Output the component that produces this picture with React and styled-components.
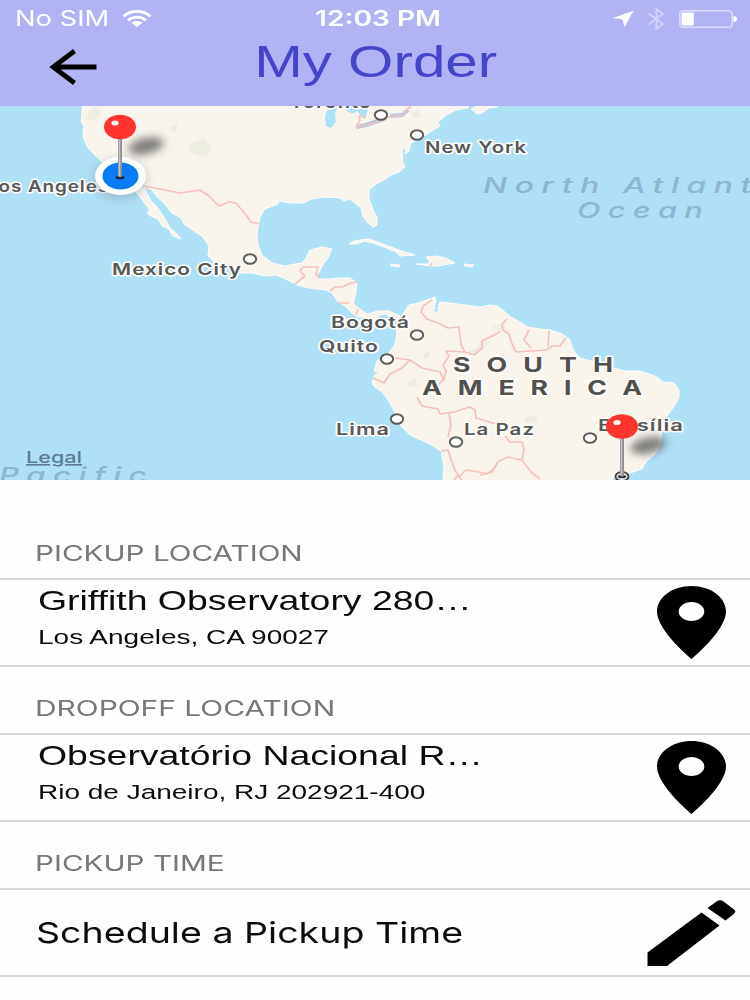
import styled, { createGlobalStyle } from 'styled-components'

const GlobalStyle = createGlobalStyle`
    body {
        margin: 0;
        background: #fefefe;
    }
    * {
        box-sizing: border-box;
    }
`
const Screen = styled.div`
    width: 750px;
    height: 1000px;
    overflow: hidden;
    background: #fefefe;
    font-family: "Liberation Sans", Arial, sans-serif;
    color: #0b0b0d;
`
// wide letterforms, used for every text outside the map
const Wide = styled.span`
    display: inline-block;
    white-space: nowrap;
    transform: scaleX(${props => props.$by || 1.34});
    transform-origin: ${props => props.$from || "left"} center;
`
const Header = styled.header`
    height: 106px;
    background: #b2b3f5;
`
const StatusBar = styled.div`
    height: 36px;
    padding: 1px 13px 0 15px;
    display: grid;
    grid-template-columns: 1fr auto 1fr;
    align-items: center;
    font-family: Inter, sans-serif;
    font-size: 21px;
    line-height: 35px;
    color: #fff;
`
const Carrier = styled.div`
    display: flex;
    align-items: center;
    gap: 35px;
`
const Clock = styled.div`
    font-weight: 600;
    padding-left: 4px;
`
const StatusIcons = styled.div`
    display: flex;
    justify-content: flex-end;
    align-items: center;
`
const NavBar = styled.div`
    height: 60px;
    padding: 0 48px;
    display: grid;
    grid-template-columns: 50px 1fr 50px;
    align-items: center;
`
const BackButton = styled.button`
    border: none;
    padding: 2px 0 0;
    background: none;
    display: flex;
    cursor: pointer;
`
const Title = styled.h1`
    margin: -8px 0 0 1px;
    font-size: 44px;
    font-weight: 400;
    line-height: 50px;
    text-align: center;
    color: #4545cb;
`
const MapView = styled.svg`
    display: block;
    width: 750px;
    height: 374px;
    background: #aee0f6;
    font-family: Inter, sans-serif;
`
const Section = styled.section`
    border-bottom: 2px solid #d8d6d9;
`
const SectionTitle = styled.h2`
    margin: 0;
    height: ${props => props.$first ? "100px" : "68px"};
    padding: 0 0 12px 35px;
    display: flex;
    align-items: flex-end;
    border-bottom: 2px solid #d8d6d9;
    font-family: Inter, sans-serif;
    font-size: 21.5px;
    font-weight: 400;
    line-height: 26px;
    color: #77767a;
`
const Row = styled.div`
    height: 85px;
    padding: 0 ${props => props.$edge || "24px"} 0 ${props => props.$edge ? "36px" : "38px"};
    display: flex;
    align-items: center;
    justify-content: space-between;
`
const Address = styled.div`
    align-self: flex-start;
    display: flex;
    flex-direction: column;
    align-items: flex-start;
    padding-top: 4px;
`
const Street = styled.div`
    font-size: 27.5px;
    line-height: 34px;
`
const City = styled.div`
    font-size: 20.5px;
    line-height: 38px;
`
const Action = styled.div`
    font-family: Inter, sans-serif;
    font-size: 29px;
    line-height: 40px;
`

const land = [
    // North and Central America
    "M83 100L81 122L84 126L83 137L88 148L96 156L103 163L110 176L130 188L136 192L141 198L145 204L150 210L147 213L151 216L158 219L162 226L167 228L170 231L173 236L181 239L177 234L170 228L166 220L161 213L158 208L151 201L147 194L145 187L152 190L157 197L163 202L172 213L181 218L184 224L194 231L203 237L209 246L208 256L215 263L230 268L240 273L252 273L265 276L276 275L290 281L297 285L309 288L326 290L332 293L338 302L345 306L353 314L358 317L365 317L375 320L380 315L386 314L392 318L398 322L400 316L389 311L378 311L367 314L360 309L353 303L355 297L357 283L350 278L340 278L330 279L318 279L317 276L322 266L328 258L332 249L322 247L310 250L306 258L302 263L295 264L285 266L272 263L262 255L258 245L257 233L260 217L265 209L278 204L279 201L290 203L303 203L312 199L325 197L340 198L344 201L350 199L356 204L361 208L363 216L367 222L373 227L377 225L377 218L372 207L369 199L369 190L376 184L384 180L391 175L399 172L405 167L403 163L402 150L406 146L405 154L409 151L411 143L418 140L430 132L438 127L440 126L438 122L445 116L456 110L468 108L472 100Z",
    "M471 109L477 106L480 100L503 100L497 107L489 108L482 113L477 114Z",
    // South America
    "M398 322L403 314L409 305L418 303L427 300L435 297L436 301L434 307L437 311L440 302L450 303L465 305L480 307L490 305L497 306L505 312L511 317L520 322L528 327L540 329L550 330L562 334L570 340L573 350L580 358L595 362L610 367L625 371L640 371L655 376L663 382L674 383L679 390L679 398L673 408L666 417L662 430L660 445L655 454L646 462L642 469L630 473L615 477L604 485L443 485L444 466L441 451L430 444L410 435L401 426L396 415L390 403L383 393L375 387L372 384L374 376L379 372L374 371L377 361L388 354L395 344L397 335L396 326Z",
    // Caribbean
    "M349 244L354 241L360 240L369 239L380 243L391 247L402 251L415 255L400 256L396 252L384 247L373 243L364 241L357 244Z",
    "M416 264L428 264L430 262L426 257L436 256L446 258L455 263L449 264L438 266L430 266Z",
    "M390 264L400 265L399 267L391 266Z",
    "M464 264L474 265L472 267L465 266Z",
]

const water = [
    "M326 112L331 107L337 107L335 114L336 122L331 128L326 126L325 118Z",
    "M343 106L348 112L353 114L357 111L361 116L366 118L368 108L364 104Z",
    "M435 309L438 309L437 312L434 311Z",
]
const lakes = "M356 127L366 125L378 121L386 118M390 116L402 115L408 110"

const parks = [
    "M466 352L477 347L482 338L490 342L483 350L472 355Z",
    "M492 327L503 323L506 328L500 332Z",
    "M410 112L418 110L421 116L414 118Z",
    "M191 143L204 139L211 147L207 158L196 154L188 152Z",
    "M88 112L96 106L102 112L95 121L87 118Z",
    "M168 128L178 123L175 133Z",
    "M422 355L428 352L430 356L425 359Z",
    "M406 382L416 379L418 386L409 388Z",
    "M524 418L538 415L536 422L526 423Z",
]

const borders = [
    "M143 186L160 189L180 193L200 190L209 196L219 206L229 202L236 203L246 215L251 222L260 224",
    "M356 127L360 120L359 116L366 118M356 127L375 123L388 117L402 115L411 106",
    "M295 284L305 276L300 271L303 267L318 267L316 274L319 278",
    "M330 291L335 287L342 287L351 283L357 282M338 303L349 303M356 315L358 309",
    "M432 300L423 306L421 312L427 319L438 323L448 328L459 327L461 345L465 352M395 358L410 360L422 368L440 372L444 380L446 371L443 365L449 356L446 351L465 352L474 355L482 348L482 341L500 332",
    "M373 378L384 383L390 374L402 368L410 360M444 379L435 388",
    "M507 319L502 324L503 330L509 334L512 344L516 352M529 330L524 340L531 348M516 352L546 350L552 346L560 346L566 338M549 331L548 346",
    "M417 397L422 406L438 409L440 414L454 412L470 407L475 410L476 418L496 424M449 413L451 425L448 437M441 451L448 450L454 468L459 477L466 470L479 472L487 474L494 469L498 462M454 480L458 475L462 480",
    "M505 436L510 442L522 442L524 450L522 460L531 472L540 479M480 475L492 472L495 466M497 462L508 457L521 460",
    "M432 263L430 266",
]

const cities = [
    { name: "Toronto", x: 290, y: 107.5, w: 82, dot: [381, 115] },
    { name: "New York", x: 425, y: 153, w: 102, dot: [417, 135] },
    { name: "Los Angeles", x: -13, y: 192, w: 122 },
    { name: "Mexico City", x: 112, y: 275, w: 130, dot: [250, 259] },
    { name: "Bogotá", x: 331, y: 328, w: 79, dot: [417, 335] },
    { name: "Quito", x: 319, y: 352, w: 60, dot: [387, 359] },
    { name: "Lima", x: 336, y: 435, w: 54, dot: [397, 419] },
    { name: "La Paz", x: 464, y: 435, w: 71, dot: [456, 442] },
    { name: "Brasília", x: 598, y: 431, w: 86, dot: [590, 438] },
]

const Pin = ({ x, y }) => (
    <g>
        <ellipse cx={x + 26} cy={y + 19} rx="18" ry="8" fill="#555" opacity="0.75" filter="url(#soft)" transform={`rotate(-12 ${x + 26} ${y + 19})`} />
        <path d={`M${x} ${y + 10}V${y + 50}`} stroke="#8d8d90" strokeWidth="4" />
        <path d={`M${x - 0.5} ${y + 10}V${y + 49}`} stroke="#c6c6c9" strokeWidth="1.6" />
        <ellipse cx={x} cy={y} rx="16" ry="12.2" fill="#fd352e" />
        <ellipse cx={x - 5} cy={y - 4} rx="3.6" ry="2.6" fill="#fff" opacity="0.95" />
    </g>
)

const OrderMap = () => (
    <MapView viewBox="0 106 750 374">
        <defs>
            <filter id="soft" x="-50%" y="-100%" width="200%" height="300%">
                <feGaussianBlur stdDeviation="4" />
            </filter>
        </defs>
        <g fill="#f9f5ed" stroke="#fffdf8" strokeWidth="1" strokeLinejoin="round">
            {land.map(d => <path key={d} d={d} />)}
        </g>
        <g fill="#aee0f6">
            {water.map(d => <path key={d} d={d} />)}
        </g>
        <path d={lakes} fill="none" stroke="#afc5e2" strokeWidth="4" />
        <g fill="#dfe8d4" opacity="0.5">
            {parks.map(d => <path key={d} d={d} />)}
        </g>
        <g fill="none" stroke="#f5c1bd" strokeWidth="1.7" strokeLinejoin="round">
            {borders.map(d => <path key={d} d={d} />)}
        </g>

        <g fill="#8bb6cc" fontSize="21" fontWeight="500" fontStyle="italic" letterSpacing="5">
            <text x="483" y="193" textLength="276" lengthAdjust="spacingAndGlyphs">North Atlant</text>
            <text x="577" y="217.5" textLength="133" lengthAdjust="spacingAndGlyphs">Ocean</text>
            <text x="-1" y="483" textLength="155" lengthAdjust="spacingAndGlyphs">Pacific</text>
        </g>

        {cities.filter(c => c.dot).map(c => (
            <ellipse key={c.name} cx={c.dot[0]} cy={c.dot[1]} rx="6.2" ry="4.8" fill="#fff" stroke="#5d5c58" strokeWidth="2" />
        ))}
        <g fill="#56585a" stroke="#fdfcf8" strokeWidth="3" strokeLinejoin="round" paintOrder="stroke" fontSize="16" fontWeight="600">
            {cities.map(c => (
                <text key={c.name} x={c.x} y={c.y} textLength={c.w} lengthAdjust="spacingAndGlyphs" letterSpacing="0.8">{c.name}</text>
            ))}
        </g>
        <g fill="#50504e" stroke="#fdfcf8" strokeWidth="3" strokeLinejoin="round" paintOrder="stroke" fontSize="20" fontWeight="700">
            <text x="453" y="372" textLength="176" lengthAdjust="spacingAndGlyphs" letterSpacing="12">SOUTH</text>
            <text x="422" y="395" textLength="236" lengthAdjust="spacingAndGlyphs" letterSpacing="12">AMERICA</text>
        </g>
        <text x="26" y="463" textLength="56" lengthAdjust="spacingAndGlyphs" fill="#5b7b91" fontSize="16.5" fontWeight="500" textDecoration="underline">Legal</text>

        <ellipse cx="120" cy="179" rx="27" ry="20" fill="#7d8a92" opacity="0.4" filter="url(#soft)" />
        <ellipse cx="120.5" cy="176" rx="25.5" ry="19" fill="#fff" />
        <ellipse cx="120.5" cy="176" rx="18" ry="13.5" fill="#087bf5" />
        <ellipse cx="120" cy="177.5" rx="4.5" ry="1.8" fill="#1a2740" />
        <ellipse cx="622" cy="476.5" rx="6.5" ry="4.6" fill="#ddd" stroke="#444" strokeWidth="1.8" />
        <ellipse cx="622" cy="476.5" rx="4" ry="1.5" fill="#222" />
        <Pin x={120} y={127} />
        <Pin x={622} y={426.5} />
    </MapView>
)

const WifiIcon = () => (
    <svg width="30" height="18" viewBox="0 0 30 18" fill="none" stroke="#fff" strokeWidth="2.8">
        <path d="M1.5 6.5C9 -0.3 21 -0.3 28.5 6.5" />
        <path d="M6 10.4C11 5.9 19 5.9 24 10.4" />
        <path d="M15 17L9.5 12.8C12.5 10.3 17.5 10.3 20.5 12.8Z" fill="#fff" stroke="none" />
    </svg>
)

const LocationIcon = () => (
    <svg width="22" height="18" viewBox="0 0 22 18">
        <path d="M21.5 0.8L12.5 17L10.6 9.4L0.8 8Z" fill="#fff" />
    </svg>
)

const BluetoothMark = styled.svg`
    margin: 0 14px 0 13px;
`
const BluetoothIcon = () => (
    <BluetoothMark width="18" height="24" viewBox="0 0 18 24" fill="none" stroke="#d2d4fb" strokeWidth="1.8">
        <path d="M1.5 6.5L16 17L9.5 22V2L16 7L1.5 17.5" />
    </BluetoothMark>
)

const BatteryIcon = () => (
    <svg width="58" height="18" viewBox="0 0 58 18">
        <rect x="0.8" y="0.8" width="52.4" height="16.4" rx="3.5" fill="none" stroke="#dcddfc" strokeWidth="1.6" />
        <rect x="2.6" y="2.6" width="12.2" height="12.8" rx="1.4" fill="#fff" />
        <path d="M54.5 5.8Q58 6.5 58 9Q58 11.5 54.500 12.2Z" fill="#fff" />
    </svg>
)

const BackIcon = () => (
    <svg width="50" height="38" viewBox="0 0 50 38" fill="none" stroke="#000" strokeWidth="4.8">
        <path d="M48.5 19H6M26.5 3L5.2 19L26.500 35" />
    </svg>
)

const PlaceIcon = () => (
    <svg width="69" height="73" viewBox="5 2 14 20" preserveAspectRatio="none">
        <path d="M12 2C8.13 2 5 5.13 5 9c0 5.25 7 13 7 13s7-7.75 7-13c0-3.87-3.13-7-7-7zm0 9.6c-1.38 0-2.6-1.14-2.6-2.6s1.22-2.6 2.6-2.6 2.6 1.14 2.6 2.6-1.22 2.6-2.6 2.6z" />
    </svg>
)

const PencilIcon = () => (
    <svg width="89" height="68" viewBox="0 0 89 68">
        <path d="M0.5 53.5L54.5 13.5L72.5 26.5L20 67H0.5Z" />
        <path d="M60.5 9L69.500 2.5Q73 0 76.500 2.500L87 10.5Q89.5 12.5 87 14.8L78.500 21.5Z" />
    </svg>
)

const App = () => {
    return (
        <Screen>
            <GlobalStyle />
            <Header>
                <StatusBar>
                    <Carrier>
                        <Wide $by={1.3}>No SIM</Wide>
                        <WifiIcon />
                    </Carrier>
                    <Clock><Wide $by={1.34} $from="center">12:03 PM</Wide></Clock>
                    <StatusIcons>
                        <LocationIcon />
                        <BluetoothIcon />
                        <BatteryIcon />
                    </StatusIcons>
                </StatusBar>
                <NavBar>
                    <BackButton aria-label="Back"><BackIcon /></BackButton>
                    <Title><Wide $by={1.325} $from="center">My Order</Wide></Title>
                </NavBar>
            </Header>
            <OrderMap />
            <Section>
                <SectionTitle $first><Wide $by={1.38}>PICKUP LOCATION</Wide></SectionTitle>
                <Row>
                    <Address>
                        <Street><Wide $by={1.36}>Griffith Observatory 280…</Wide></Street>
                        <City><Wide $by={1.365}>Los Angeles, CA 90027</Wide></City>
                    </Address>
                    <PlaceIcon />
                </Row>
            </Section>
            <Section>
                <SectionTitle><Wide $by={1.39}>DROPOFF LOCATION</Wide></SectionTitle>
                <Row>
                    <Address>
                        <Street><Wide $by={1.36}>Observatório Nacional R…</Wide></Street>
                        <City><Wide $by={1.365}>Rio de Janeiro, RJ 202921-400</Wide></City>
                    </Address>
                    <PlaceIcon />
                </Row>
            </Section>
            <Section>
                <SectionTitle><Wide $by={1.38}>PICKUP TIME</Wide></SectionTitle>
                <Row $edge="14px">
                    <Action><Wide $by={1.295}>Schedule a Pickup Time</Wide></Action>
                    <PencilIcon />
                </Row>
            </Section>
        </Screen>
    )
}

export default App
